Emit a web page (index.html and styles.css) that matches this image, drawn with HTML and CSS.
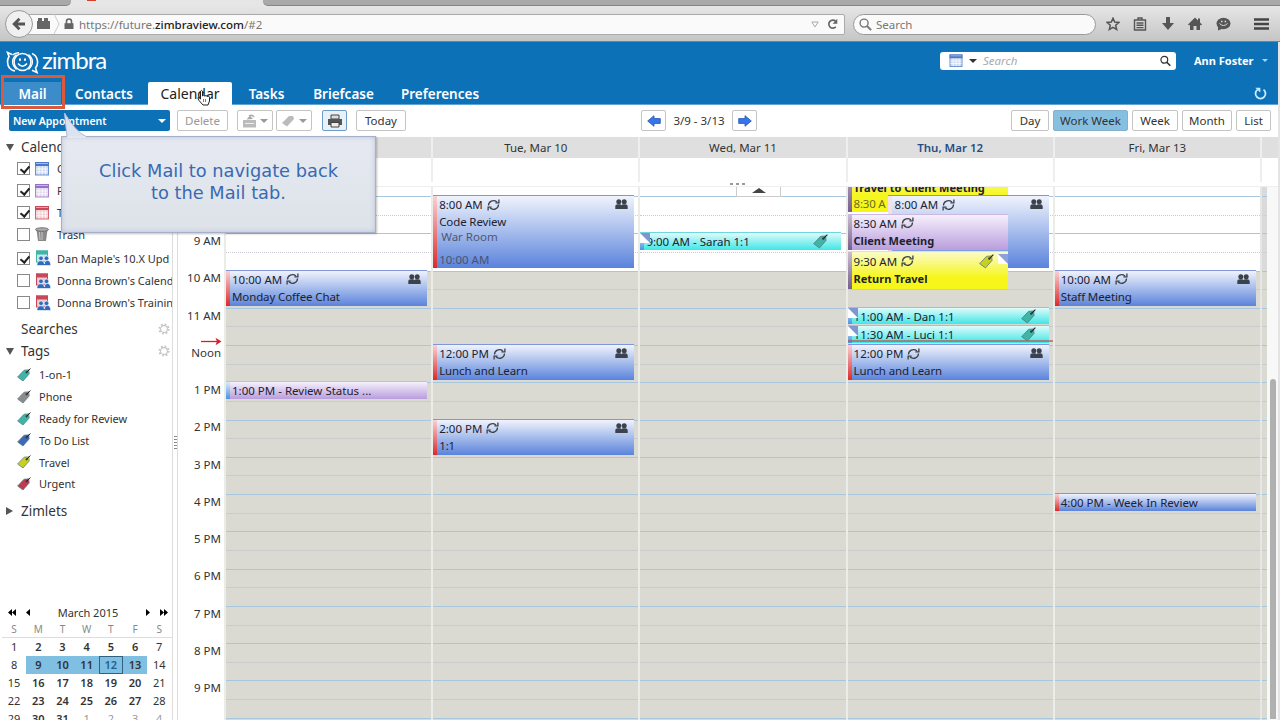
FILE: index.html
```html
<!DOCTYPE html>
<html lang="en">
<head>
  <meta charset="UTF-8">
  <title>Zimbra: Calendar</title>
  <link rel="stylesheet" href="styles.css">
</head>
<body>
  <svg width="0" height="0" class="defs">
    <symbol id="i-tag" viewBox="0 0 14 14"><path d="M.6 9 7 2.2 11.800 1.800 12.200 6 6 13Z" fill="currentColor" stroke="#55777a" stroke-width=".7"/><path d="M9.500 4.500 13.400.5" stroke="#222" fill="none"/><circle cx="9.600" cy="4.300" r="1.100" fill="#333"/></symbol>
    <symbol id="i-cal" viewBox="0 0 14 14"><path d="M0 0h14v14H0z" fill="#fff"/><rect x=".5" y="1" width="13" height="12.500" fill="currentColor" fill-opacity=".28" stroke="currentColor" stroke-opacity=".8"/><path d="M0 .5h14v4H0z" fill="currentColor"/><path d="M1 2h12" stroke="#fff" stroke-opacity=".5"/><path d="M1 7.500h12M1 10.300h12M4 5v8M7.200 5v8M10.400 5v8" stroke="#fff" stroke-width=".8"/></symbol>
    <symbol id="i-shared" viewBox="0 0 16 16"><rect x="1.500" y="1" width="11" height="11" fill="currentColor" fill-opacity=".3" stroke="currentColor"/><path d="M1 .5h12v4H1z" fill="currentColor"/><g fill="#2f6cc0" stroke="#fff" stroke-width=".6"><path d="M2 15.500c-.5-6 7-6 7.500-1.500 0-5 6.500-5 6.200 1.500z"/><circle cx="6" cy="8.300" r="2.300"/><circle cx="11.500" cy="8.300" r="2.300"/></g></symbol>
    <symbol id="i-people" viewBox="0 0 13 11"><g fill="#3c424c"><circle cx="3.800" cy="2.800" r="2.500"/><circle cx="9.200" cy="2.800" r="2.500"/><path d="M.3 10V7.300Q.3 5.200 3 5.200h1.700Q6.200 5.200 6.500 6.300 6.800 5.200 8.500 5.200H10q2.700 0 2.700 2.100V10z"/></g></symbol>
    <symbol id="i-repeat" viewBox="0 0 13 12"><g fill="none" stroke="#3a4048" stroke-width="1.300"><path d="M1.500 6.500C1.500 2.500 6.300.2 10 3M11.500 5.500C11.500 9.500 6.700 11.800 3 9"/><path d="M11.900.4v3.500H8.400M1.100 11.600V8.100h3.500"/></g></symbol>
    <symbol id="i-gear" viewBox="0 0 12 12"><circle cx="6" cy="6" r="4.600" fill="none" stroke="#c4c6c8" stroke-width="2" stroke-dasharray="1.800 1.810"/><circle cx="6" cy="6" r="3.400" fill="none" stroke="#c4c6c8" stroke-width="1.100"/></symbol>
    <symbol id="i-glass" viewBox="0 0 12 12"><circle cx="4.700" cy="4.700" r="3.700" fill="none" stroke="currentColor" stroke-width="1.300"/><path d="m7.400 7.400 3.800 3.800" stroke="currentColor" stroke-width="1.800"/></symbol>
    <symbol id="i-arrow" viewBox="0 0 14 12"><path d="M.7 6 7 .7V3.600h6.300v4.800H7v2.900z" fill="#3578ec" stroke="#2450b0" stroke-width=".8"/></symbol>
  </svg>

  <div class="browser">
    <div class="tabstrip"><div class="oldtab"></div><div class="curtab"><i></i></div><div class="resttab"></div></div>
    <div class="navbar">
      <div class="back"><svg width="14" height="14" viewBox="0 0 14 14"><path d="M13 7H3M7.500 1.800 2.200 7l5.300 5.200" fill="none" stroke="#555" stroke-width="2.800"/></svg></div>
      <div class="url">
        <svg width="13" height="12" viewBox="0 0 13 12"><path d="M0 3h1V0h4v3h2V0h4v3h2v8H0z" fill="#666"/></svg>
        <svg width="9" height="20" viewBox="0 0 9 20"><path d="M2 0l5 10-5 10" fill="none" stroke="#ccc"/></svg>
        <svg width="10" height="12" viewBox="0 0 10 12"><path d="M2.500 6V3.500a2.500 2.500 0 0 1 5 0V6" fill="none" stroke="#666" stroke-width="1.600"/><path d="M.5 5.200h9V11h-9z" fill="#666"/></svg>
        <span class="address">https://future.<b>zimbraview.com</b>/#2</span>
        <svg width="8" height="7" viewBox="0 0 8 7"><path d="M.8 1h6.400L4 6z" fill="none" stroke="#aaa"/></svg>
        <svg width="11" height="12" viewBox="0 0 11 12"><path d="M8.800 8.800a4 4 0 1 1-.2-5.600" fill="none" stroke="#666" stroke-width="1.700"/><path d="M10.300.8v5H5.600z" fill="#666"/></svg>
      </div>
      <div class="websearch"><svg width="13" height="13"><use href="#i-glass"/></svg>Search</div>
      <div class="navicons">
        <svg width="14" height="14" viewBox="0 0 14 14"><path d="m7 1.200 1.700 3.900 4.200.4-3.200 2.800 1 4.200L7 10.300l-3.700 2.200 1-4.200L1.100 5.500l4.200-.4z" fill="none" stroke="#555" stroke-width="1.500"/></svg>
        <svg width="14" height="14" viewBox="0 0 14 14"><path d="M1.500 3h11v10h-11zM5 2.800V1h4v1.800M3.500 6h7M3.500 8.300h7M3.500 10.600h7" fill="none" stroke="#555" stroke-width="1.400"/></svg>
        <svg width="14" height="14" viewBox="0 0 14 14"><path d="M5 0h4v6h4l-6 7-6-7h4z" fill="#555"/></svg>
        <svg width="14" height="14" viewBox="0 0 14 14"><path d="M7 .5 10 3.500V1.500h2v4l2 2-1 1-1-.8V13H8.500V9h-3v4H2V7.700l-1 .8-1-1z" fill="#555"/></svg>
        <svg width="15" height="14" viewBox="0 0 15 14"><ellipse cx="7.500" cy="6.500" rx="7" ry="5.700" fill="#555"/><path d="M2 9v4.500l5-2z" fill="#555"/><path d="M3.500 6.500q4 4 8 0" stroke="#ddd" fill="none"/><path d="M5 4.400h1.500M8.600 4.400h1.500" stroke="#ddd" stroke-width="1.500"/></svg>
        <svg class="burger" width="15" height="14" viewBox="0 0 15 14"><path d="M0 2.500h15M0 7h15M0 11.500h15" stroke="#444" stroke-width="2.600"/></svg>
      </div>
    </div>
  </div>

  <div class="app">
    <div class="header">
      <div class="brandrow">
        <div class="logo">
          <svg width="33" height="23" viewBox="0 0 33 23" fill="none" stroke="#fff" stroke-width="1.600"><path d="M6 3.500 1.500 1.500 3 5.500C1 8.500 1 14 3.500 17q2 2.400 5.500 3"/><path d="M26 2.500c6 2.500 7 10.500 3.500 14.500l1.500 4.500-5-2.200M13 1.800Q9 2 6.500 4"/><circle cx="16.500" cy="11" r="8.500"/><path d="M10.500 3.500q-8 7 0 15M22.500 3.500q8 7 0 15" stroke-width="1.200"/><path d="M12 12.500q4.500 5.500 9 0"/><path d="M14 7.500v2.200M19 7.500v2.200" stroke-width="2"/></svg>
          <span>zimbra</span>
        </div>
        <div class="appsearch">
          <svg width="14" height="13" class="blue"><use href="#i-cal"/></svg>
          <i class="caret"></i>
          <em>Search</em>
          <svg width="11" height="12"><use href="#i-glass"/></svg>
        </div>
        <div class="user">Ann Foster<i class="caret"></i></div>
      </div>
      <div class="tabs">
        <div class="tab mail">Mail</div>
        <div class="tab contacts">Contacts</div>
        <div class="tab selected">Calendar</div>
        <div class="tab tasks">Tasks</div>
        <div class="tab briefcase">Briefcase</div>
        <div class="tab prefs">Preferences</div>
        <svg class="reload" width="13" height="13" viewBox="0 0 13 13"><path d="M9.500 2.600a5 5 0 1 1-6 0" fill="none" stroke="#c9ecff" stroke-width="1.800"/><path d="M1.300.8h5v4.600z" fill="#c9ecff"/></svg>
      </div>
    </div>

    <div class="toolbar">
      <div class="newappt">New Appointment<i class="caret"></i></div>
      <div class="btn disabled delete">Delete</div>
      <div class="btn disabled move"><svg width="15" height="14" viewBox="0 0 15 14"><path d="M1 6h13v7.500H1z" fill="#bbb"/><path d="M4.500 5.500 8 1.500l3 3.500z" fill="#aaa"/><path d="M7 2q3-2 5 1" stroke="#aaa" stroke-width="1.500" fill="none"/><path d="M3 9.500h9" stroke="#eee"/></svg><i class="caret"></i></div>
      <div class="btn disabled tagbtn"><svg width="15" height="14" viewBox="0 0 15 14"><path d="M1 9 8 2h4l1 3-7 7.500z" fill="#bbb"/></svg><i class="caret"></i></div>
      <div class="btn print"><svg width="14" height="14" viewBox="0 0 14 14"><path d="M3 1h8v4H3z" fill="#ddd" stroke="#444"/><path d="M0 5h14v6H0z" fill="#555"/><path d="M3 8.500h8V13H3z" fill="#eee" stroke="#444"/></svg></div>
      <div class="btn today">Today</div>
      <div class="pager">
        <div class="btn"><svg width="14" height="12"><use href="#i-arrow"/></svg></div>
        <span>3/9 - 3/13</span>
        <div class="btn next"><svg width="14" height="12"><use href="#i-arrow"/></svg></div>
      </div>
      <div class="views">
        <div class="btn dayview">Day</div>
        <div class="btn workweek">Work Week</div>
        <div class="btn week">Week</div>
        <div class="btn month">Month</div>
        <div class="btn list">List</div>
      </div>
    </div>

    <div class="main">
      <div class="sidebar">
        <div class="head"><i class="open"></i>Calendars</div>
        <div class="row"><i class="check on"></i><svg class="blue"><use href="#i-cal"/></svg>Calendar</div>
        <div class="row"><i class="check on"></i><svg class="purple"><use href="#i-cal"/></svg>Personal</div>
        <div class="row"><i class="check on"></i><svg class="red"><use href="#i-cal"/></svg>Team</div>
        <div class="row"><i class="check"></i><svg viewBox="0 0 14 15"><path d="M1.500 3h11L11 14H3z" fill="#8a8a8a"/><path d="M4.500 5l.5 8M7 5v8" stroke="#c8c8c8"/><ellipse cx="7" cy="2.500" rx="6.500" ry="1.800" fill="#aaa" stroke="#666" stroke-width=".8"/></svg>Trash</div>
        <div class="row shared first"><i class="check on"></i><svg class="teal"><use href="#i-shared"/></svg>Dan Maple's 10.X Upd</div>
        <div class="row shared"><i class="check"></i><svg class="red"><use href="#i-shared"/></svg>Donna Brown's Calend</div>
        <div class="row shared"><i class="check"></i><svg class="red"><use href="#i-shared"/></svg>Donna Brown's Trainin</div>
        <div class="head searches"><i></i>Searches<svg><use href="#i-gear"/></svg></div>
        <div class="head"><i class="open"></i>Tags<svg><use href="#i-gear"/></svg></div>
        <div class="tagrow"><svg class="teal"><use href="#i-tag"/></svg>1-on-1</div>
        <div class="tagrow"><svg class="gray"><use href="#i-tag"/></svg>Phone</div>
        <div class="tagrow"><svg class="teal"><use href="#i-tag"/></svg>Ready for Review</div>
        <div class="tagrow"><svg class="navy"><use href="#i-tag"/></svg>To Do List</div>
        <div class="tagrow"><svg class="yellow"><use href="#i-tag"/></svg>Travel</div>
        <div class="tagrow"><svg class="crimson"><use href="#i-tag"/></svg>Urgent</div>
        <div class="head zimlets"><i class="closed"></i>Zimlets</div>
        <div class="minical">
          <div class="monthbar">
            <svg width="8" height="7" viewBox="0 0 8 7"><path d="M4 0v7L0 3.500zM8 0v7L4 3.500z"/></svg>
            <svg width="8" height="7" viewBox="0 0 8 7"><path d="M5 0v7L1 3.500z"/></svg>
            <span>March 2015</span>
            <svg width="8" height="7" viewBox="0 0 8 7"><path d="M3 0v7l4-3.500z"/></svg>
            <svg width="8" height="7" viewBox="0 0 8 7"><path d="M0 0v7l4-3.500zM4 0v7l4-3.500z"/></svg>
          </div>
          <div class="dow"><span>S</span><span>M</span><span>T</span><span>W</span><span>T</span><span>F</span><span>S</span></div>
          <div class="days" id="days"></div>
        </div>
      </div>
      <div class="sash"><i></i></div>
      <div class="calendar">
        <div class="dayheads">
          <span class="gutter"></span>
          <span>Mon, Mar 9</span><span>Tue, Mar 10</span><span>Wed, Mar 11</span><span class="now">Thu, Mar 12</span><span>Fri, Mar 13</span>
          <span class="rest"></span>
        </div>
        <div class="allday">
          <span class="gutter"></span><span></span><span></span><span></span><span></span><span></span><span class="rest"></span>
        </div>
        <div class="scroller">
          <div class="hours" id="hours"></div>
          <div class="week-grid" id="week"></div>
          <div class="endcol" id="endcol"></div>
          <div class="scrollbar"><i></i></div>
          <div class="more"></div>
          <div class="dots"></div>
          <svg class="nowarrow" width="21" height="9" viewBox="0 0 21 9"><path d="M0 4.500h18" stroke="#e0182c" stroke-width="1.300"/><path d="M14.500.8 20.500 4.500l-6 3.700 1.500-3.700z" fill="#e0182c"/></svg>
        </div>
      </div>
    </div>
  </div>

  <div class="highlight"></div>
  <div class="callout">
    <svg class="tail" width="30" height="26" viewBox="0 0 30 26"><path d="M4 25 1.500 1Q12 19 23 24.500" fill="#dde2f0" stroke="#b4bcd2"/><path d="M4.500 24h18v2h-18z" fill="#e3e7f1"/></svg>
    <p>Click Mail to navigate back<br>to the Mail tab.</p>
  </div>
  <svg class="hand" width="14" height="17" viewBox="0 0 14 17"><path d="M3.500 10V2.200q1-1.500 2 0V7l1-.8 1.300.8 1.200-.4 1.200.8 1.500-.2.800 1V12l-1.500 4h-5L2 11.500.8 8.800q1-1 2.700 1.200z" fill="#fff" stroke="#222"/><path d="M6.500 10v3M8.500 10v3" stroke="#444" stroke-width=".7"/></svg>

  <script>
    const HOUR = 37.27;
    const FIRST = 8;
    const OFFSET = 8;

    // s/e are decimal hours, day 0 is Monday
    const EVENTS = [
      { day: 0, s: 10, e: 11, time: '10:00 AM', title: 'Monday Coffee Chat', color: 'blue', bar: 'red', repeat: true, people: true },
      { day: 0, s: 13, e: 13.5, time: '1:00 PM - Review Status ...', color: 'purple', bar: 'sky' },
      { day: 1, s: 8, e: 10, time: '8:00 AM', title: 'Code Review', where: 'War Room', end: '10:00 AM', color: 'blue', bar: 'red', repeat: true, people: true },
      { day: 1, s: 12, e: 13, time: '12:00 PM', title: 'Lunch and Learn', color: 'blue', bar: 'red', repeat: true, people: true },
      { day: 1, s: 14, e: 15, time: '2:00 PM', title: '1:1', color: 'blue', bar: 'red', repeat: true, people: true },
      { day: 2, s: 9, e: 9.5, time: '9:00 AM - Sarah 1:1', color: 'cyan', bar: 'sky', tag: 'teal', corner: true },
      { day: 3, s: 7.08, e: 8.5, title: 'Travel to Client Meeting', end: '8:30 A', color: 'yellow', bar: 'plum', cls: 'narrow strong' },
      { day: 3, s: 8, e: 10, time: '8:00 AM', color: 'blue', bar: 'pale', cls: 'inset', repeat: true, people: true },
      { day: 3, s: 8.5, e: 9.5, time: '8:30 AM', title: 'Client Meeting', color: 'purple', bar: 'plum', cls: 'narrow strong', repeat: true },
      { day: 3, s: 9.5, e: 10.55, time: '9:30 AM', title: 'Return Travel', color: 'yellow', bar: 'plum', cls: 'narrow strong tagged', repeat: true, tag: 'yellow', cornerRight: true },
      { day: 3, s: 11, e: 11.5, time: '11:00 AM - Dan 1:1', color: 'cyan', bar: 'sky', tag: 'teal', corner: true },
      { day: 3, s: 11.5, e: 12, time: '11:30 AM - Luci 1:1', color: 'cyan', bar: 'sky', tag: 'teal', corner: true },
      { day: 3, s: 12, e: 13, time: '12:00 PM', title: 'Lunch and Learn', color: 'blue', bar: 'red', repeat: true, people: true },
      { day: 4, s: 10, e: 11, time: '10:00 AM', title: 'Staff Meeting', color: 'blue', bar: 'red', repeat: true, people: true },
      { day: 4, s: 16, e: 16.5, time: '4:00 PM - Week In Review', color: 'blue', bar: 'red' }
    ];

    function icon(name, cls) {
      return `<svg class="${cls}"><use href="#i-${name}"/></svg>`;
    }

    function slots() {
      let html = '<div class="lead"></div>';
      for (let h = FIRST; h < 23; h++) {
        html += `<div class="slot ${h < 10 ? 'free' : ''}"><i></i></div>`;
      }
      return html;
    }

    function eventHtml(ev) {
      const top = OFFSET + (ev.s - FIRST) * HOUR;
      const height = (ev.e - ev.s) * HOUR - 1.2;
      return `<div class="event ${ev.color} ${ev.cls || ''}" style="top:${top.toFixed(1)}px;height:${height.toFixed(1)}px">
        <i class="bar ${ev.bar}"></i>
        ${ev.corner ? '<i class="corner"></i>' : ''}
        <div class="line"><span>${ev.time || ''}</span>${ev.repeat ? icon('repeat', 'repeat') : ''}<span class="fill"></span>${ev.tag ? icon('tag', 'tag ' + ev.tag) : ''}${ev.people ? icon('people', 'people') : ''}${ev.cornerRight ? '<i class="corner-right"></i>' : ''}</div>
        ${ev.title ? `<div class="title">${ev.title}</div>` : ''}
        ${ev.where ? `<div class="where">${ev.where}</div>` : ''}
        ${ev.end ? `<div class="end">${ev.end}</div>` : ''}
      </div>`;
    }

    let hours = '';
    for (let h = FIRST + 1; h < 22; h++) {
      const label = h === 12 ? 'Noon' : h < 12 ? h + ' AM' : (h - 12) + ' PM';
      hours += `<div>${label}</div>`;
    }
    document.getElementById('hours').innerHTML = hours;

    let week = '';
    for (let d = 0; d < 5; d++) {
      week += `<div class="day">${slots()}${EVENTS.filter(e => e.day === d).map(eventHtml).join('')}${d === 3 ? '<div class="nowline"></div>' : ''}</div>`;
    }
    document.getElementById('week').innerHTML = week;
    document.getElementById('endcol').innerHTML = slots();

    let days = '';
    for (let i = 1; i <= 35; i++) {
      const cls = [];
      if (i >= 9 && i <= 13) cls.push('sel');
      if (i === 12) cls.push('today');
      if (i > 31) cls.push('other');
      if (i % 7 > 1) cls.push('weekday');
      days += `<span class="${cls.join(' ')}">${i > 31 ? i - 31 : i}</span>`;
    }
    document.getElementById('days').innerHTML = days;
  </script>
</body>
</html>
```
FILE: styles.css
```css
* {
  box-sizing: border-box;
}
body {
  margin: 0;
  width: 1280px;
  height: 720px;
  overflow: hidden;
  position: relative;
  background: #e4e4e4;
  color: #333;
  font-family: "Noto Sans", "Open Sans", sans-serif;
  font-size: 11.5px;
}
svg {
  flex: none;
}
.defs {
  position: absolute;
}
i {
  font-style: normal;
}
.blue { color: #4b78c8; }
.purple { color: #9670c4; }
.red { color: #c8485a; }
.teal { color: #3fb5a8; }
.gray { color: #8c8c8c; }
.navy { color: #4068b8; }
.yellow { color: #c8cf20; }
.crimson { color: #c03a50; }
.caret {
  border: 4px solid transparent;
  border-top: 4px solid currentColor;
  border-bottom: 0;
}

/* browser chrome */
.browser {
  height: 42px;
  border-bottom: 1px solid #7a8288;
  background: #ccc;
}
.tabstrip {
  height: 6px;
  display: flex;
  background: #e6e6e6;
}
.oldtab, .resttab {
  background: #a9a9a9;
  border-bottom: 1px solid #858585;
}
.oldtab {
  width: 71px;
  border-bottom-right-radius: 5px;
}
.curtab {
  width: 192px;
}
.curtab i {
  display: block;
  width: 9px;
  height: 1px;
  margin-left: 16px;
  background: #d4402a;
}
.resttab {
  flex: 1;
  border-bottom-left-radius: 5px;
}
.navbar {
  height: 35px;
  display: flex;
  align-items: center;
  padding: 1px 11px 0 5px;
  background: linear-gradient(#e6e6e6, #c6c5c5);
}
.back {
  width: 28px;
  height: 28px;
  flex: none;
  border-radius: 50%;
  border: 1px solid #999;
  background: #f0f0f0;
  display: flex;
  align-items: center;
  justify-content: center;
  z-index: 1;
}
.url {
  width: 818px;
  height: 21px;
  margin-left: -6px;
  padding: 0 6px 0 9px;
  display: flex;
  align-items: center;
  background: #fbfafa;
  border: 1px solid #aaa;
  border-radius: 0 2px 2px 0;
}
.url svg:nth-child(2) {
  margin: 0 3px 0 2px;
}
.address {
  flex: 1;
  margin-left: 5px;
  color: #777;
}
.address b {
  font-weight: 500;
  color: #222;
}
.url svg:last-child {
  margin-left: 8px;
}
.websearch {
  width: 243px;
  height: 21px;
  margin-left: 8px;
  padding-left: 5px;
  display: flex;
  align-items: center;
  gap: 4px;
  border: 1px solid #999;
  border-radius: 11px;
  background: #fbfafa;
  color: #777;
}
.navicons {
  flex: 1;
  display: flex;
  align-items: center;
  justify-content: space-between;
  padding-left: 10px;
}
.burger {
  margin-left: 10px;
}

/* zimbra header */
.app {
  width: 1278px;
  height: 678px;
  background: #fff;
  display: flex;
  flex-direction: column;
}
.header {
  height: 63px;
  background: #0d71b8;
  border-bottom: 1px solid #63a4d6;
}
.brandrow {
  height: 40px;
  display: flex;
  align-items: center;
  padding: 0 10px 0 6px;
}
.logo {
  display: flex;
  align-items: center;
  gap: 3px;
  flex: 1;
  color: #fff;
}
.logo span {
  font: 24px/30px Lato, sans-serif;
  letter-spacing: -1px;
  margin-top: -5px;
}
.appsearch {
  width: 236px;
  height: 18px;
  margin-top: -3px;
  padding: 0 5px 0 9px;
  display: flex;
  align-items: center;
  background: #fff;
  border-radius: 3px;
  color: #333;
}
.appsearch .caret {
  margin: 0 6px 0 6px;
}
.appsearch em {
  flex: 1;
  color: #aaa;
}
.user {
  margin: -3px 0 0 18px;
  width: 74px;
  display: flex;
  align-items: center;
  justify-content: space-between;
  font-weight: bold;
  font-size: 11px;
  color: #fff;
  white-space: nowrap;
}
.user .caret {
  border-width: 3px;
  color: #9fd8f8;
}
.tabs {
  height: 23px;
  display: flex;
  align-items: center;
  padding-left: 4px;
  color: #fff;
  font-size: 13.5px;
  font-weight: 600;
}
.tab {
  height: 23px;
  line-height: 24px;
  text-align: center;
  margin-right: 3px;
}
.mail {
  width: 57px;
  background: #3d8cca;
}
.contacts { width: 80px; }
.selected {
  width: 84px;
  margin-left: 1px;
  background: #fff;
  color: #222;
  font-weight: 400;
  font-size: 14px;
  border-radius: 2px 2px 0 0;
}
.tasks { width: 63px; }
.briefcase { width: 85px; }
.prefs { width: 102px; }
.reload {
  margin: 0 11px 0 auto;
}

/* toolbar */
.toolbar {
  height: 32px;
  display: flex;
  align-items: center;
  padding: 0 7px 1px 9px;
}
.newappt {
  width: 161px;
  height: 21px;
  padding: 0 4px;
  display: flex;
  align-items: center;
  justify-content: space-between;
  background: #0d71b8;
  border-radius: 2px;
  color: #fff;
  font-size: 10.5px;
  font-weight: 600;
}
.btn {
  height: 21px;
  display: flex;
  align-items: center;
  justify-content: center;
  border: 1px solid #c4c4c4;
  border-radius: 2px;
  background: #fff;
}
.disabled {
  color: #999;
}
.delete { width: 51px; margin-left: 7px; }
.move, .tagbtn {
  width: 36px;
  margin-left: 9px;
  gap: 3px;
}
.tagbtn { margin-left: 3px; }
.print {
  width: 25px;
  margin-left: 10px;
  border-color: #6c9cc8;
  background: #e8f1f8;
}
.today { width: 50px; margin-left: 9px; }
.pager {
  margin-left: 235px;
  display: flex;
  align-items: center;
}
.pager span {
  width: 66px;
  text-align: center;
}
.pager .btn {
  width: 25px;
}
.next svg {
  transform: scaleX(-1);
}
.views {
  margin-left: auto;
  display: flex;
  gap: 4px;
}
.dayview { width: 38px; }
.workweek { width: 75px; background: #86bfe0; border-color: #86b0cc; }
.week { width: 46px; }
.month { width: 50px; }
.list { width: 35px; }

/* sidebar */
.main {
  flex: 1;
  display: flex;
  min-height: 0;
}
.sidebar {
  width: 172px;
  display: flex;
  flex-direction: column;
  overflow: hidden;
  white-space: nowrap;
  font-size: 11px;
}
.head {
  height: 22px;
  flex: none;
  display: flex;
  align-items: center;
  padding: 0 2px 0 6px;
  font-size: 13.5px;
  margin-top: -1px;
}
.head i {
  width: 8px;
  margin-right: 7px;
}
.head svg {
  width: 12px;
  height: 12px;
  margin-left: auto;
}
.open {
  border: 4px solid transparent;
  border-top: 7px solid #555;
  border-bottom: 0;
}
.closed {
  border: 4px solid transparent;
  border-left: 7px solid #555;
  border-right: 0;
}
.row {
  height: 21.8px;
  flex: none;
  display: flex;
  align-items: center;
  padding-left: 17px;
}
.row svg {
  width: 14px;
  height: 15px;
  margin: 0 8px 0 5px;
}
.shared {
  height: 22.3px;
}
.shared svg {
  width: 16px;
  height: 16px;
  margin: 0 6px 0 5px;
}
.first {
  margin-top: 2px;
}
.check {
  width: 13px;
  height: 13px;
  flex: none;
  border: 1px solid #888;
  background: #fff;
}
.on::after {
  content: "";
  display: block;
  width: 4px;
  height: 7px;
  margin: 1px 0 0 4px;
  border: solid #222;
  border-width: 0 2px 2px 0;
  transform: rotate(40deg);
}
.searches {
  margin-top: 3px;
  height: 23px;
}
.searches + .head {
  margin-top: 0;
}
.tagrow {
  height: 21.8px;
  flex: none;
  display: flex;
  align-items: center;
  gap: 8px;
  padding-left: 17px;
}
.searches + .head + .tagrow {
  margin-top: 2px;
}
.tagrow svg {
  width: 14px;
  height: 14px;
}
.zimlets {
  margin-top: 5px;
}
.minical {
  margin-top: auto;
  height: 116px;
  flex: none;
  overflow: hidden;
  padding-left: 2px;
}
.monthbar {
  height: 17px;
  display: flex;
  align-items: center;
  padding: 0 4px 0 6px;
}
.monthbar span {
  flex: 1;
  text-align: center;
}
.monthbar svg + svg {
  margin-left: 9px;
}
.dow, .days {
  display: grid;
  grid-template-columns: repeat(7, 24.2px);
  text-align: center;
}
.dow {
  height: 17px;
  line-height: 17px;
  font-size: 10px;
  color: #888;
  border-bottom: 1px solid #ddd;
}
.days {
  grid-auto-rows: 17.900px;
  line-height: 17px;
  font-size: 11px;
}
.days .weekday {
  font-weight: 600;
}
.days .sel {
  background: #7fbfe2;
}
.days .today {
  width: auto;
  margin: 0;
  border: 1px solid #33607f;
  line-height: 15px;
  color: #1f5f94;
}
.days .other {
  color: #999;
  font-weight: 400;
}
.sash {
  width: 6px;
  border: solid #ddd;
  border-width: 0 1px;
  display: flex;
  align-items: center;
}
.sash i {
  width: 3px;
  height: 13px;
  margin: 27px 0 0 1px;
  background: repeating-linear-gradient(#888 0 1px, #fff 1px 3px);
}

/* calendar */
.calendar {
  flex: 1;
  display: flex;
  flex-direction: column;
  min-width: 0;
}
.dayheads, .allday {
  display: grid;
  grid-template-columns: 46px repeat(5, 207.2px) 1fr;
}
.dayheads {
  height: 21px;
  line-height: 21px;
  text-align: center;
  background: #dfdfdf;
}
.dayheads span, .allday span {
  border-left: 2px solid #eee;
}
.dayheads .gutter, .allday .gutter {
  border: 0;
}
.dayheads .now {
  color: #1f4f86;
  font-weight: 600;
}
.allday {
  height: 29px;
  border-bottom: 1px solid #eee;
  padding-bottom: 4px;
}
.scroller {
  flex: 1;
  min-height: 0;
  display: flex;
  position: relative;
}
.hours {
  width: 46px;
  overflow: hidden;
  padding: 45px 3px 0 0;
  text-align: right;
}
.hours div {
  height: 37.27px;
  line-height: 18px;
}
.week-grid {
  display: grid;
  grid-template-columns: repeat(5, 207.2px);
  overflow: hidden;
}
.day {
  position: relative;
  height: 533px;
  border-left: 2px solid #ebebe8;
  overflow: hidden;
}
.lead {
  height: 9px;
}
.slot {
  height: 37.27px;
  border-top: 1px solid #a8c6dd;
  background: #dadad2;
}
.slot i {
  display: block;
  height: 18.600px;
  border-bottom: 1px solid #c8cccc;
}
.free {
  background: #fff;
}
.free i {
  border-bottom: 1px dotted #c8ccd2;
}
.endcol {
  width: 7px;
  overflow: hidden;
  height: 533px;
  border-left: 2px solid #e6e6e4;
}
.endcol .lead, .endcol .free {
  background: #dadada;
}
.scrollbar {
  flex: 1;
  background: #f8f8f8;
}
.scrollbar i {
  display: block;
  width: 6px;
  height: 340px;
  margin: 192px 0 0 3px;
  border-radius: 3px 3px 0 0;
  background: #b0b0b0;
}
.event {
  position: absolute;
  left: 0;
  width: 201px;
  padding-left: 6px;
  overflow: hidden;
  color: #1c2230;
  white-space: nowrap;
  border-top: 1px solid #8295d8;
}
.event.blue {
  background: linear-gradient(#f0f3fd, #a8beec 48%, #5b83dc);
}
.event.purple {
  background: linear-gradient(#f6f0fc, #b99ddd);
  border-color: #cdb8e4;
}
.event.cyan {
  background: linear-gradient(#e0fbfb, #3fe6e6);
  border-color: #70d6dc;
}
.event.yellow {
  background: linear-gradient(#fbfbc8, #f6f61a 70%);
  border-color: #e8e890;
}
.narrow {
  width: 160px;
}
.event.inset {
  left: 40px;
  width: 161px;
  padding-left: 7px;
}
.bar {
  position: absolute;
  left: 0;
  top: 0;
  bottom: 0;
  width: 4px;
}
.bar.red { background: linear-gradient(#fad0d4, #dc2a2a); }
.bar.sky { background: linear-gradient(#d8ecfc, #4a94e0); }
.bar.plum { background: linear-gradient(#cbbcd0, #75608c); }
.bar.pale { background: linear-gradient(#f6e4ee, #e8c8d4); }
.line {
  height: 17px;
  display: flex;
  align-items: center;
}
.fill {
  flex: 1;
}
.repeat {
  width: 13px;
  height: 12px;
  margin-left: 4px;
}
.people {
  width: 13px;
  height: 11px;
  margin-right: 6px;
}
.tag {
  width: 15px;
  height: 15px;
  margin-right: 13px;
}
.title {
  height: 17px;
  line-height: 17px;
  letter-spacing: -.12px;
}
.strong .title {
  font-weight: bold;
  font-size: 11px;
  letter-spacing: 0;
}
.where {
  margin: -1px 0 0 2px;
  line-height: 15px;
  color: #4c5878;
}
.end {
  position: absolute;
  left: 6px;
  bottom: 0;
  line-height: 17px;
  color: #4a5270;
}
.yellow .end {
  color: #6a6a28;
  letter-spacing: -.2px;
}
.corner {
  position: absolute;
  left: 0;
  top: 0;
  border: 5px solid #7f96d2;
  border-left-color: #fff;
  border-bottom-color: #fff;
}
.corner-right {
  border: 5px solid #8ba0dc;
  border-left-color: #fff;
  border-bottom-color: #fff;
  align-self: flex-start;
}
.tagged .line {
  padding-top: 2px;
}
.tagged .title {
  margin-top: 1px;
}
.tagged .tag {
  margin-right: 4px;
}
.nowline {
  position: absolute;
  left: 0;
  right: 0;
  top: 153px;
  height: 2px;
  background: rgba(190, 80, 80, .65);
}
.more {
  position: absolute;
  left: 558px;
  top: 0;
  width: 45px;
  height: 10px;
  background: #fff;
  border: 1px solid #ccc;
  border-top: 0;
}
.more::after {
  content: "";
  position: absolute;
  left: 15px;
  top: 1px;
  border: 7px solid transparent;
  border-top: 0;
  border-bottom: 5px solid #444;
}
.dots {
  position: absolute;
  left: 552px;
  top: -4px;
  width: 15px;
  height: 2px;
  background: repeating-linear-gradient(90deg, #999 0 3px, #fff 3px 6px);
}
.nowarrow {
  position: absolute;
  left: 23px;
  top: 150px;
}

/* tutorial overlay */
.highlight {
  position: absolute;
  left: 1px;
  top: 75px;
  width: 64px;
  height: 34px;
  border: 3px solid #db5a3c;
}
.callout {
  position: absolute;
  left: 61px;
  top: 136px;
  width: 315px;
  height: 97px;
  background: linear-gradient(#e6e9f1, #dde2e9);
  border: 1px solid #a6b0ca;
  box-shadow: inset 0 0 5px #b8c2d6, 1px 1px 2px rgba(0, 0, 0, .25);
}
.callout p {
  margin: 23px 0 0;
  text-align: center;
  font: 17.800px/22px "DejaVu Sans", sans-serif;
  color: #386ab2;
}
.tail {
  position: absolute;
  left: 1px;
  top: -25px;
}
.hand {
  position: absolute;
  left: 197px;
  top: 89px;
}
```
